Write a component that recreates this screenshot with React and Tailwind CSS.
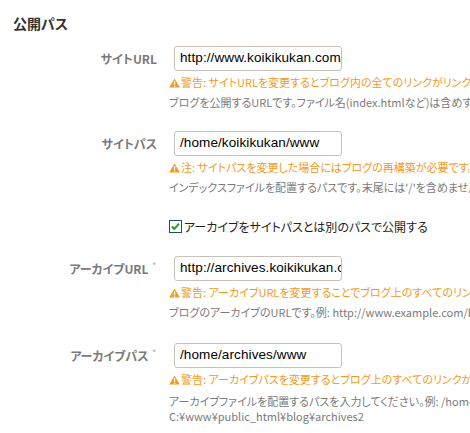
import React from "react";

const jp = "font-['MS_PGothic','Noto_Sans_CJK_JP',sans-serif] [font-feature-settings:'palt']";

function Warn() {
  return (
    <svg width="11" height="10" viewBox="0 0 11 10" className="inline-block mr-[1px] align-[-1px]">
      <path d="M5.5 0.5 L10.8 9.6 L0.2 9.6 Z" fill="#f39a1e" />
      <rect x="4.9" y="3" width="1.3" height="3.8" fill="#fff" />
      <rect x="4.9" y="7.6" width="1.3" height="1.2" fill="#fff" />
    </svg>
  );
}

function CheckBox() {
  return (
    <svg width="13" height="13" viewBox="0 0 13 13" className="shrink-0">
      <rect x="0.5" y="0.5" width="12" height="12" fill="#fff" stroke="#1c4f78" />
      <path d="M3 6.5 L5.3 9 L10 3.6" fill="none" stroke="#21a12a" strokeWidth="2" />
    </svg>
  );
}

function Row({ label, req, value, warn, help, mt, helpMt = "mt-[5px]" }) {
  return (
    <div className={`flex ${mt}`}>
      <div className="w-[157px] h-[25px] flex items-center justify-end shrink-0">
        <span className={`${jp} text-[12px] font-bold text-[#7a7a7a] whitespace-nowrap`}>{label}</span>
        {req && <span className="text-[9px] text-[#aaa] ml-[4px] -mt-[6px] font-['Liberation_Sans',sans-serif]">*</span>}
        {req && <span className="w-[1px]" />}
      </div>
      <div className="ml-[12px] shrink-0 w-[600px]">
        <div className="ml-[5px] w-[168px] h-[25px] border border-[#c9c2bb] rounded-[3px] bg-white overflow-hidden flex items-center pl-[5px]">
          <span className="font-['Liberation_Sans',sans-serif] text-[13.5px] tracking-[0.1px] text-black whitespace-nowrap">{value}</span>
        </div>
        <div className={`${jp} mt-[4px] text-[11px] leading-[15px] text-[#f39a1e] whitespace-nowrap`}>
          <Warn />{warn}
        </div>
        <div className={`${jp} ${helpMt} text-[11px] leading-[15px] text-[#7a7a7a] whitespace-nowrap`}>
          {help}
        </div>
      </div>
    </div>
  );
}

export default function App() {
  return (
    <div className="w-[470px] h-[433px] overflow-hidden bg-white">
      <div className={`${jp} pt-[14px] pl-[13px] text-[14px] leading-[18px] font-bold text-[#333]`}>公開パス</div>
      <Row
        mt="mt-[14px]"
        label="サイトURL"
        value="http://www.koikikukan.com/"
        warn="警告: サイトURLを変更するとブログ内の全てのリンクがリンク切れになります。"
        help="ブログを公開するURLです。ファイル名(index.htmlなど)は含めず、末尾は'/'で終わります。"
      />
      <Row
        mt="mt-[21px]"
        label="サイトパス"
        value="/home/koikikukan/www"
        warn="注: サイトパスを変更した場合にはブログの再構築が必要です。"
        help="インデックスファイルを配置するパスです。末尾には'/'を含めません。"
      />
      <div className="flex mt-[24px]">
        <div className="w-[169px] shrink-0" />
        <div className={`${jp} flex items-center gap-[2px] text-[12px] leading-[15px] text-[#222] whitespace-nowrap`}>
          <CheckBox />
          <span>アーカイブをサイトパスとは別のパスで公開する</span>
        </div>
      </div>
      <Row
        mt="mt-[22px]"
        label="アーカイブURL"
        req
        value="http://archives.koikikukan.com/"
        warn="警告: アーカイブURLを変更することでブログ上のすべてのリンクが変更されます。"
        help="ブログのアーカイブのURLです。例: http://www.example.com/blog/archives/"
      />
      <Row
        mt="mt-[23px]"
        helpMt="mt-[7px]"
        label="アーカイブパス"
        req
        value="/home/archives/www"
        warn="警告: アーカイブパスを変更するとブログ上のすべてのリンクが変更されます。"
        help={
          <>
            アーカイブファイルを配置するパスを入力してください。例: /home/melody/public_html/blog/archives または
            <br />
            C:¥www¥public_html¥blog¥archives2
          </>
        }
      />
    </div>
  );
}
